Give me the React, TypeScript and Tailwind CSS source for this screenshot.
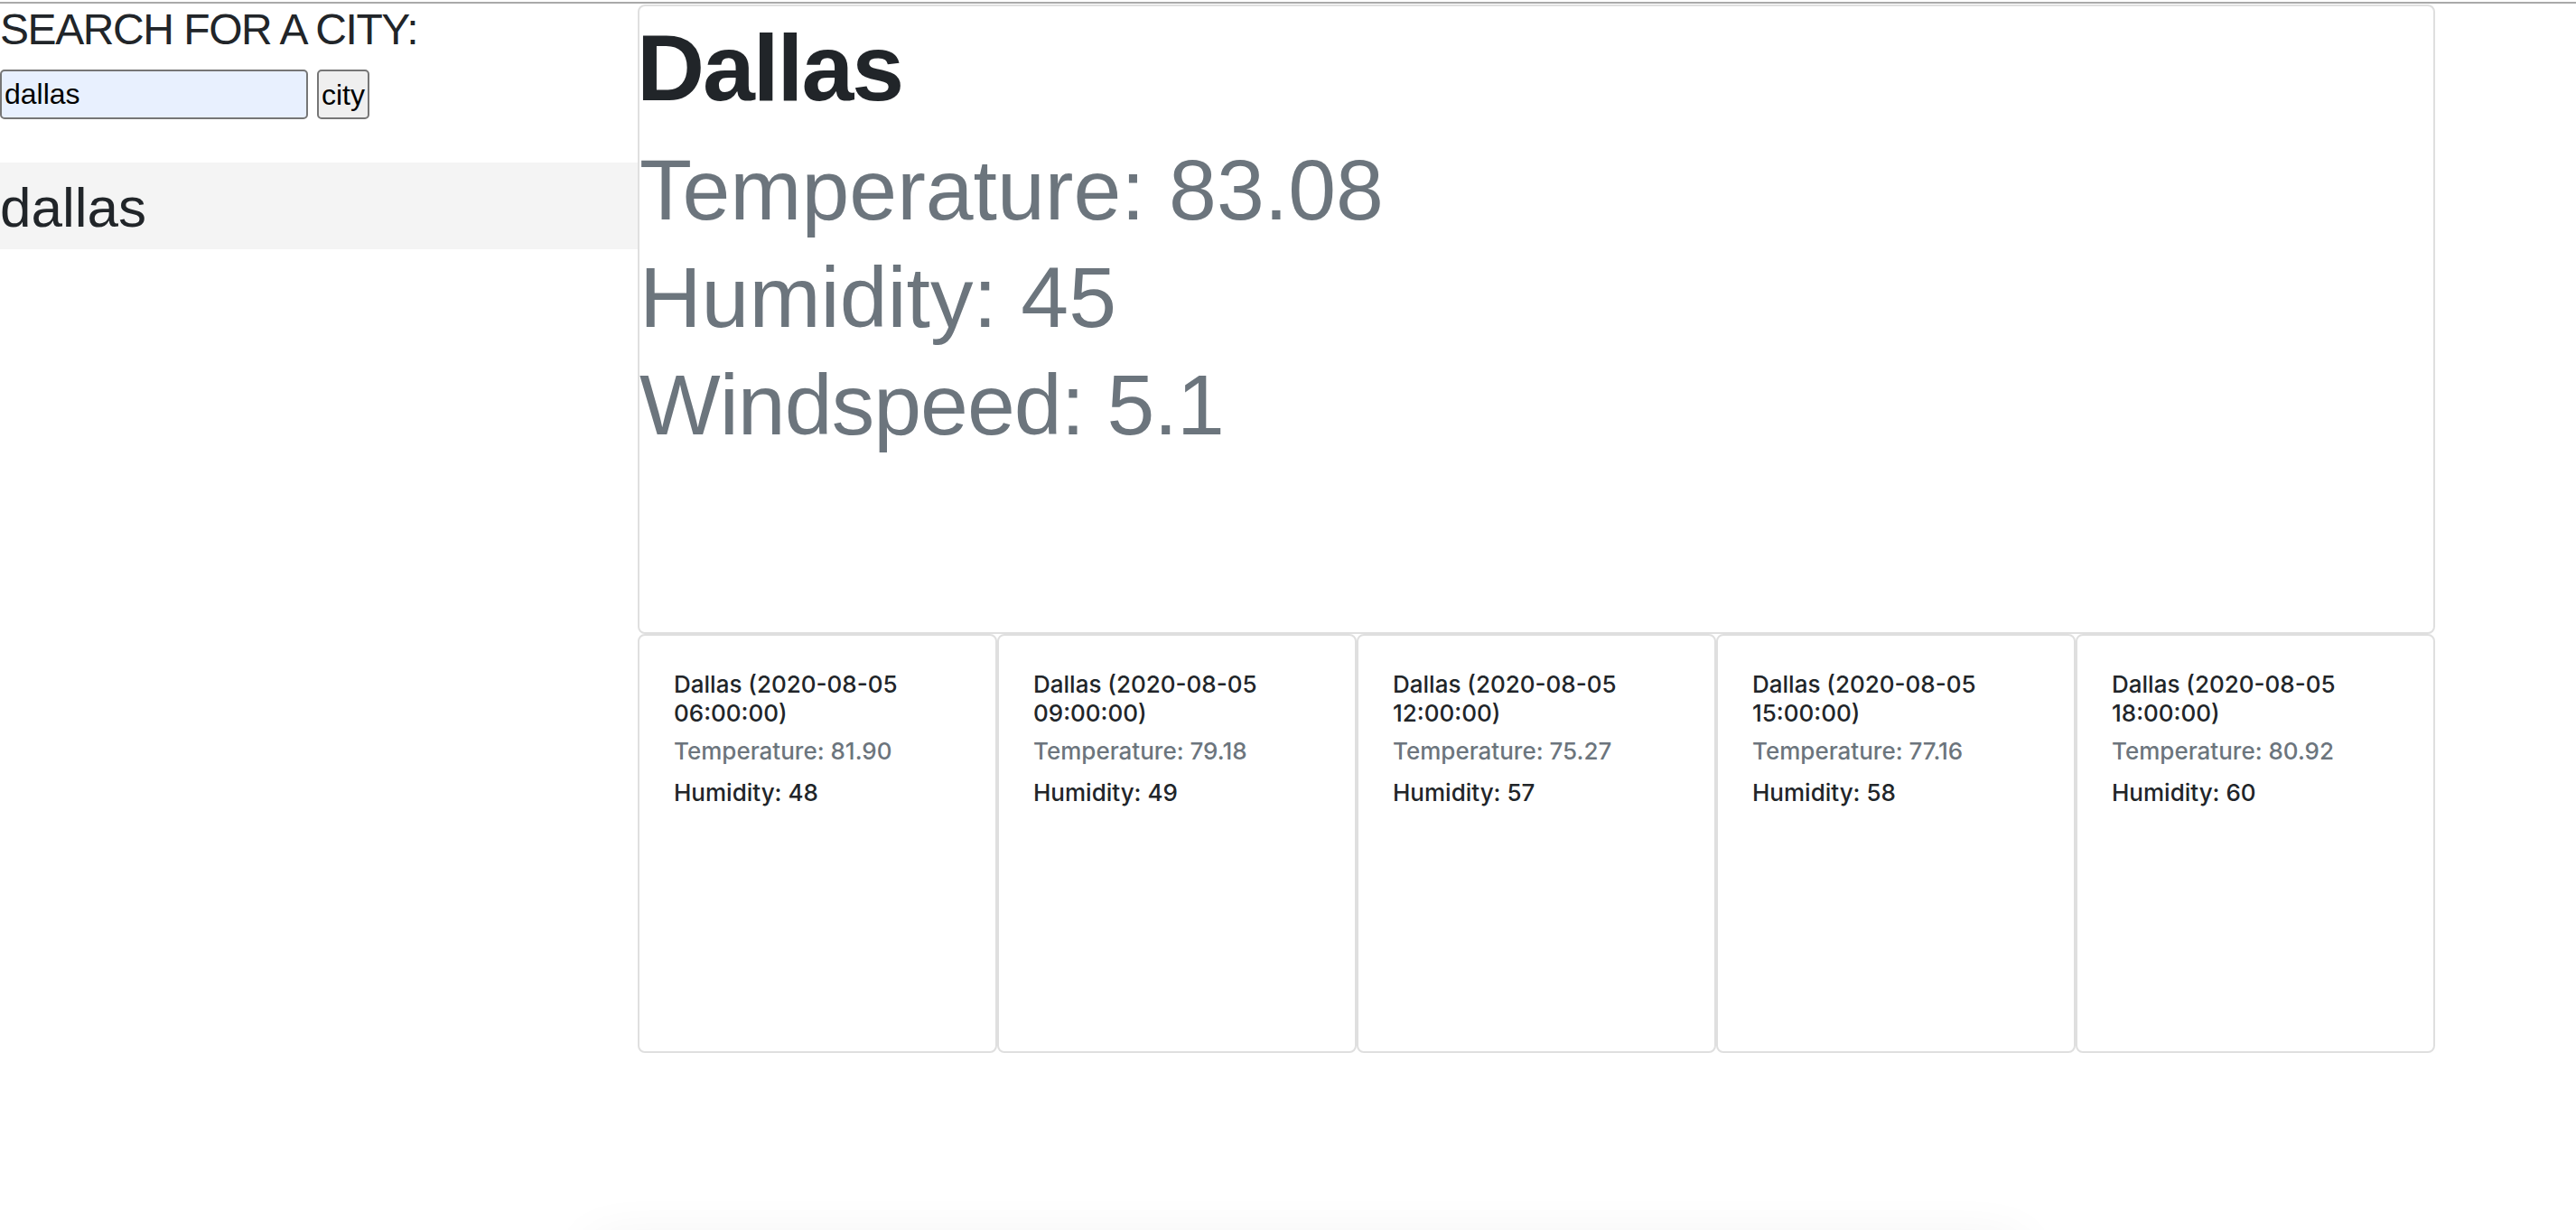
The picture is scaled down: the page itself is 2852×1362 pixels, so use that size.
const forecasts = [
  { time: "2020-08-05 06:00:00", temp: "81.90", humidity: 48 },
  { time: "2020-08-05 09:00:00", temp: "79.18", humidity: 49 },
  { time: "2020-08-05 12:00:00", temp: "75.27", humidity: 57 },
  { time: "2020-08-05 15:00:00", temp: "77.16", humidity: 58 },
  { time: "2020-08-05 18:00:00", temp: "80.92", humidity: 60 },
];

function ForecastCard({ time, temp, humidity }: { time: string; temp: string; humidity: number }) {
  return (
    <div className="h-[464px] border-2 border-[#dfdfdf] rounded-[8px] pt-[38px] px-[38px] font-['Inter',sans-serif] text-[26px] leading-[32px] font-medium">
      <p className="text-[#212529]">Dallas ({time})</p>
      <p className="mt-[10px] text-[#6c757d]">Temperature: {temp}</p>
      <p className="mt-[14px] text-[#212529]">Humidity: {humidity}</p>
    </div>
  );
}

export default function App() {
  return (
    <div className="min-h-screen bg-white font-['Liberation_Sans',Arial,sans-serif] text-[#212529]">
      <div className="mt-[2px] border-t-2 border-[#a9a9a9] pt-px">
        <div className="flex">
          {/* Search column */}
          <aside className="w-[706px] shrink-0">
            <h2 className="text-[48px] leading-[56px] tracking-[-0.03em]">SEARCH FOR A CITY:</h2>
            <form className="mt-[16px] flex gap-[10px]" onSubmit={(e) => e.preventDefault()}>
              <input
                defaultValue="dallas"
                className="w-[341px] h-[55px] border-2 border-[#767676] rounded-[5px] bg-[#e8f0fe] px-[3px] text-[32px] text-black outline-none"
              />
              <button
                type="submit"
                className="h-[55px] border-2 border-[#767676] rounded-[5px] bg-[#efefef] px-[3px] text-[32px] text-black"
              >
                city
              </button>
            </form>
            <div className="mt-[48px] h-[96px] bg-[#f4f4f4] pt-[3px] text-[62px] leading-[93px]">dallas</div>
          </aside>

          {/* Weather */}
          <main className="w-[1990px] shrink-0">
            <section className="h-[697px] border-2 border-[#dfdfdf] rounded-[8px]">
              <h1 className="mt-[2px] -ml-[3px] text-[104px] leading-[132px] font-bold tracking-[-0.02em]">Dallas</h1>
              <div className="mt-[10px] text-[95px] leading-[119px] text-[#6c757d]">
                <p>Temperature: 83.08</p>
                <p>Humidity: 45</p>
                <p className="tracking-[-0.01em]">Windspeed: 5.1</p>
              </div>
            </section>
            <div className="grid grid-cols-5">
              {forecasts.map((f) => (
                <ForecastCard key={f.time} {...f} />
              ))}
            </div>
          </main>
        </div>
        <div className="mt-[210px] ml-[655px] w-[1582px] h-[40px] shadow-[0_0_60px_rgba(0,0,0,0.07)]" />
      </div>
    </div>
  );
}
